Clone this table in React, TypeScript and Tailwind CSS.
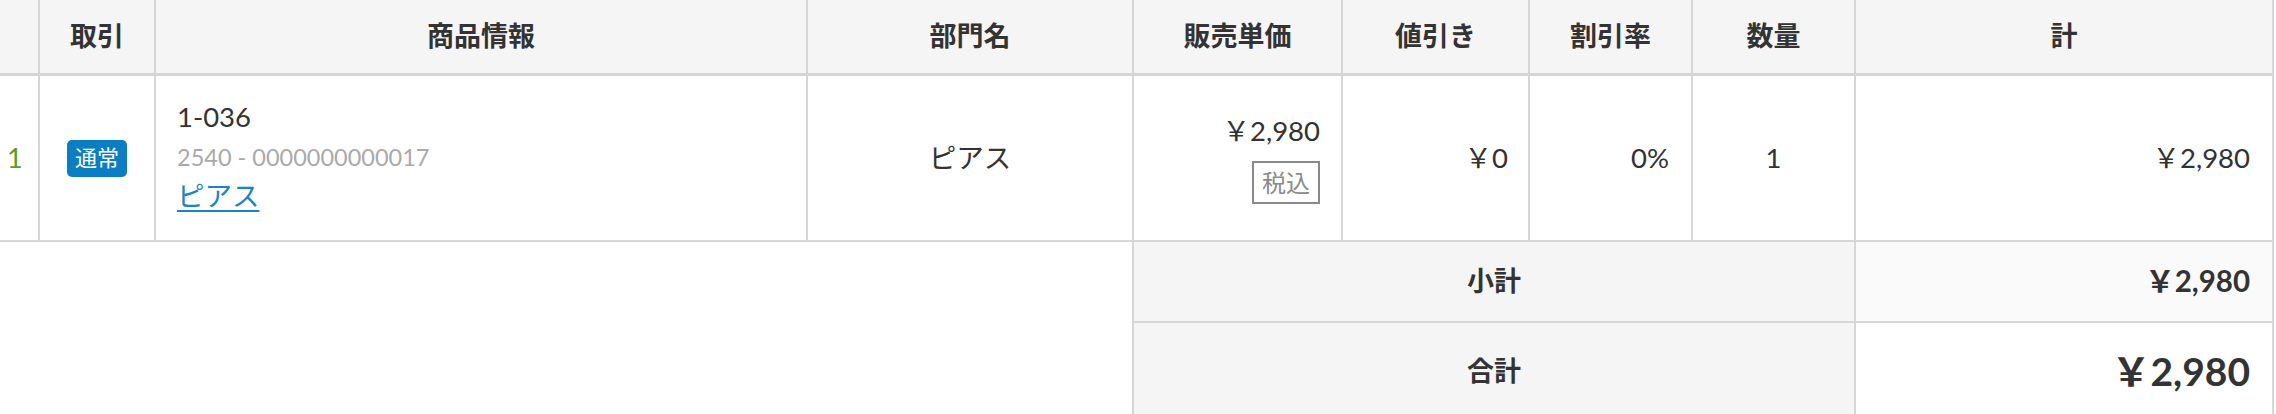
import React from 'react';

const font = { fontFamily: '"Lato", "Noto Sans CJK JP", sans-serif' };

const headers = ['', '取引', '商品情報', '部門名', '販売単価', '値引き', '割引率', '数量', '計'];

export default function App() {
  return (
    <div className="w-[2276px] h-[414px] overflow-hidden bg-white text-[#333]" style={font}>
      <div className="grid w-[2274px] grid-cols-[38px_116px_652px_326px_209px_187px_163px_163px_420px]">
        {/* header */}
        {headers.map((h, i) => (
          <div
            key={i}
            className={
              'h-[76px] bg-[#f5f5f5] border-b-[3px] border-[#d6d6d6] flex items-center justify-center text-[27px] font-bold ' +
              (i > 0 ? 'border-l-2 ' : '') +
              (i === headers.length - 1 ? 'border-r-2' : '')
            }
          >
            {h}
          </div>
        ))}

        {/* item row */}
        <div className="h-[166px] border-b-2 border-[#d6d6d6] flex items-center pl-[7px] text-[27px] text-[#5c9c24]">1</div>
        <div className="h-[166px] border-b-2 border-l-2 border-[#d6d6d6] flex items-center justify-center">
          <span className="inline-flex items-center h-[37px] px-[8px] rounded-[5px] bg-[#0b7dc3] text-white text-[22px] leading-none">
            通常
          </span>
        </div>
        <div className="h-[166px] border-b-2 border-l-2 border-[#d6d6d6] flex flex-col justify-center pl-[21px]">
          <div className="text-[27.5px] leading-[40px] text-[#333]">1-036</div>
          <div className="text-[23.5px] leading-[40px] text-[#aaaaaa]">2540 - 0000000000017</div>
          <div className="leading-[38px]">
            <a className="text-[27.5px] text-[#1a85c6] underline decoration-2 underline-offset-[4px]" href="#">
              ピアス
            </a>
          </div>
        </div>
        <div className="h-[166px] border-b-2 border-l-2 border-[#d6d6d6] flex items-center justify-center text-[27.5px]">
          ピアス
        </div>
        <div className="h-[166px] border-b-2 border-l-2 border-[#d6d6d6] flex flex-col items-end justify-center gap-[12px] pr-[21px]">
          <div className="text-[27.5px] leading-[37px]">￥2,980</div>
          <div className="border-2 border-[#8a8a8a] px-[8px] text-[24px] leading-[39px] text-[#8a8a8a]">税込</div>
        </div>
        <div className="h-[166px] border-b-2 border-l-2 border-[#d6d6d6] flex items-center justify-end pr-[20px] text-[27.5px]">
          ￥0
        </div>
        <div className="h-[166px] border-b-2 border-l-2 border-[#d6d6d6] flex items-center justify-end pr-[22px] text-[27.5px]">
          0%
        </div>
        <div className="h-[166px] border-b-2 border-l-2 border-[#d6d6d6] flex items-center justify-center text-[27.5px]">
          1
        </div>
        <div className="h-[166px] border-b-2 border-l-2 border-r-2 border-[#d6d6d6] flex items-center justify-end pr-[22px] text-[27.5px]">
          ￥2,980
        </div>

        {/* totals */}
        <div className="col-span-4 row-span-2" />
        <div className="col-span-4 h-[81px] bg-[#f5f5f5] border-b-2 border-l-2 border-[#d6d6d6] flex items-center justify-center text-[27px] font-bold">
          小計
        </div>
        <div className="h-[81px] bg-[#fafafa] border-b-2 border-l-2 border-r-2 border-[#d6d6d6] flex items-center justify-end pr-[22px] text-[29.5px] font-bold">
          ￥2,980
        </div>
        <div className="col-span-4 h-[97px] bg-[#f5f5f5] border-l-2 border-[#d6d6d6] flex items-center justify-center text-[27px] font-bold">
          合計
        </div>
        <div className="h-[97px] bg-white border-l-2 border-r-2 border-[#d6d6d6] flex items-center justify-end pr-[22px] text-[39px] font-bold">
          ￥2,980
        </div>
      </div>
    </div>
  );
}
